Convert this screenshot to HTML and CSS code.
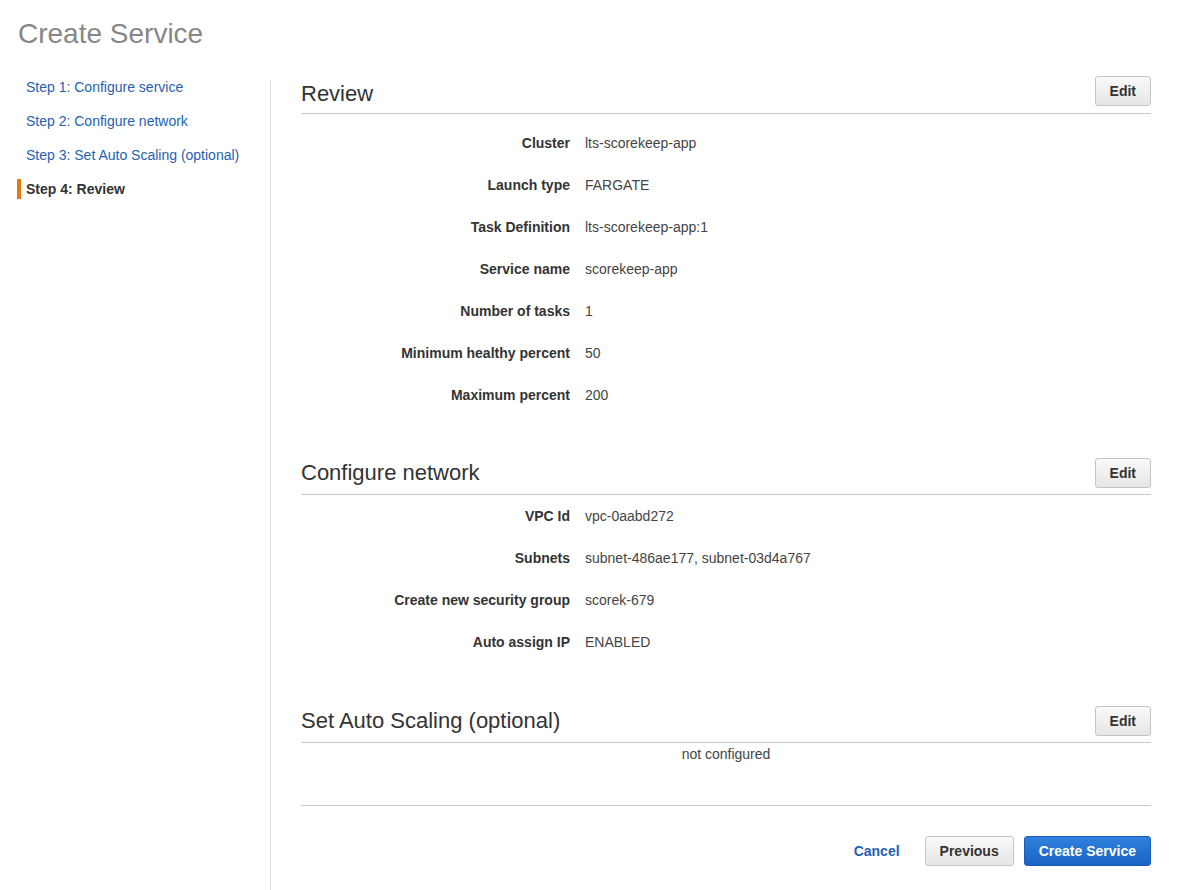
FILE: index.html
```html
<!DOCTYPE html>
<html lang="en">
<head>
<meta charset="utf-8">
<title>Create Service</title>
<link rel="stylesheet" href="styles.css">
</head>
<body>
<div class="page">
  <h1 class="page-title">Create Service</h1>
  <div class="layout">
    <nav class="steps">
      <a class="step" href="#">Step 1: Configure service</a>
      <a class="step" href="#">Step 2: Configure network</a>
      <a class="step" href="#">Step 3: Set Auto Scaling (optional)</a>
      <span class="step step-active">Step 4: Review</span>
    </nav>
    <main class="content">
      <section class="section section-review">
        <div class="section-head">
          <h2 class="section-title">Review</h2>
          <button class="btn">Edit</button>
        </div>
        <div class="fields fields-review">
          <div class="label">Cluster</div><div class="value">lts-scorekeep-app</div>
          <div class="label">Launch type</div><div class="value">FARGATE</div>
          <div class="label">Task Definition</div><div class="value">lts-scorekeep-app:1</div>
          <div class="label">Service name</div><div class="value">scorekeep-app</div>
          <div class="label">Number of tasks</div><div class="value">1</div>
          <div class="label">Minimum healthy percent</div><div class="value">50</div>
          <div class="label">Maximum percent</div><div class="value">200</div>
        </div>
      </section>
      <section class="section section-network">
        <div class="section-head">
          <h2 class="section-title">Configure network</h2>
          <button class="btn">Edit</button>
        </div>
        <div class="fields fields-network">
          <div class="label">VPC Id</div><div class="value">vpc-0aabd272</div>
          <div class="label">Subnets</div><div class="value">subnet-486ae177, subnet-03d4a767</div>
          <div class="label">Create new security group</div><div class="value">scorek-679</div>
          <div class="label">Auto assign IP</div><div class="value">ENABLED</div>
        </div>
      </section>
      <section class="section section-scaling">
        <div class="section-head">
          <h2 class="section-title">Set Auto Scaling (optional)</h2>
          <button class="btn">Edit</button>
        </div>
        <div class="empty">not configured</div>
      </section>
      <div class="footer">
        <button class="btn btn-link">Cancel</button>
        <button class="btn">Previous</button>
        <button class="btn btn-primary">Create Service</button>
      </div>
    </main>
  </div>
</div>
</body>
</html>
```

FILE: styles.css
```css
* { box-sizing: border-box; }

html, body {
  margin: 0;
  padding: 0;
  background: #fff;
}

body {
  font-family: "Liberation Sans", Arial, Helvetica, sans-serif;
  font-size: 14px;
  color: #333;
}

.page {
  min-height: 100vh;
  display: flex;
  flex-direction: column;
}

.page-title {
  margin: 0;
  padding: 20px 18px 0;
  font-size: 28px;
  line-height: 28px;
  font-weight: normal;
  color: #878787;
}

.layout {
  flex: 1;
  display: flex;
  margin-top: 28px;
  background: linear-gradient(#dcdcdc, #dcdcdc) 270px 4px / 1px 100% no-repeat;
}

.steps {
  width: 271px;
  flex: none;
  display: flex;
  flex-direction: column;
  align-items: flex-start;
  gap: 14px;
  padding-top: 1px;
}

.step {
  display: block;
  margin-left: 17px;
  border-left: 4px solid transparent;
  padding-left: 5px;
  line-height: 20px;
  font-size: 14px;
  color: #1f5fb4;
  text-decoration: none;
}

.step-active {
  border-left-color: #e37a0f;
  color: #333;
  font-weight: bold;
}

.content {
  flex: 1;
  padding: 0 44px 0 30px;
}

.section + .section {
  margin-top: 54px;
}

.section-review + .section {
  margin-top: 53px;
}

.section-head {
  display: flex;
  align-items: center;
  justify-content: space-between;
  padding-bottom: 6px;
  border-bottom: 1px solid #c8c8c8;
}

.section-review .section-head {
  align-items: flex-end;
  padding-bottom: 7px;
}

.section-title {
  margin: 0;
  font-size: 22px;
  line-height: 24px;
  font-weight: normal;
  color: #333;
}

.btn {
  height: 30px;
  padding: 0 14px;
  font-family: inherit;
  font-size: 14px;
  font-weight: bold;
  color: #333;
  background: linear-gradient(#f9f9f9, #e6e6e6);
  border: 1px solid #c4c4c4;
  border-radius: 3px;
  cursor: pointer;
}

.btn-link {
  background: none;
  border-color: transparent;
  color: #1f5fb4;
  padding: 0 14px;
}

.btn-primary {
  color: #fff;
  background: linear-gradient(#2f81dc, #1964c3);
  border-color: #1b5db5;
}

.fields {
  display: grid;
  grid-template-columns: 269px 1fr;
  column-gap: 15px;
  row-gap: 22px;
  line-height: 20px;
}

.fields-review { padding-top: 19px; }
.fields-network { padding-top: 11px; }

.label {
  text-align: right;
  font-weight: bold;
  color: #333;
}

.value {
  color: #444;
}

.empty {
  padding-top: 1px;
  line-height: 20px;
  text-align: center;
  color: #444;
}

.footer {
  margin-top: 41px;
  border-top: 1px solid #c8c8c8;
  padding-top: 30px;
  display: flex;
  justify-content: flex-end;
  gap: 10px;
}
```
